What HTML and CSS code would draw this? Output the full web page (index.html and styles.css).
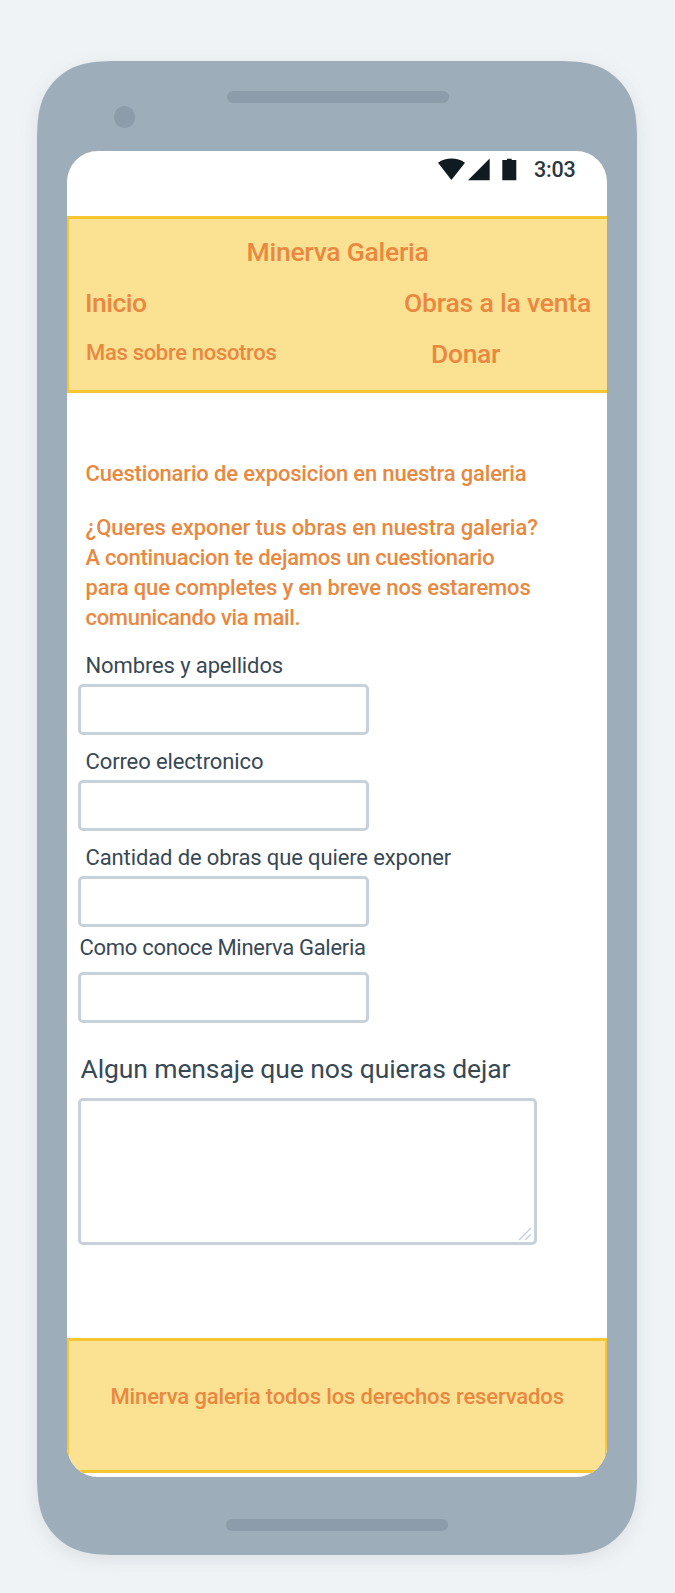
FILE: index.html
```html
<!DOCTYPE html>
<html lang="es">
<head>
<meta charset="utf-8">
<title>Minerva Galeria</title>
<link rel="stylesheet" href="styles.css">
</head>
<body>
<div class="phone">
  <svg class="shell" viewBox="0 0 600 1494" aria-hidden="true">
    <path d="M0 80C0 50 3.8 33.7 18.75 18.75S50 0 80 0H520C550 0 566.3 3.8 581.25 18.75S600 50 600 80V1414C600 1444 596.2 1460.3 581.25 1475.25S550 1494 520 1494H80C50 1494 33.7 1490.2 18.75 1475.25S0 1444 0 1414Z"/>
  </svg>
  <div class="top-bezel">
    <span class="camera"></span>
    <span class="speaker"></span>
  </div>
  <div class="screen">
    <div class="status">
      <svg class="status-icons" width="79" height="23" viewBox="0 0 79 23" aria-hidden="true">
        <path d="M0 4.8C8 -.8 19 -.8 27 4.8L13.4 22Z"/>
        <path d="M30 22.2L51.7.6V22.2Z"/>
        <path d="M64.3 1.9H69V.7H73.7V1.9H78.3V22.2H64.3Z"/>
      </svg>
      <span class="time">3:03</span>
    </div>
    <header class="header">
      <h1 class="brand">Minerva Galeria</h1>
      <nav class="nav">
        <a class="link-home">Inicio</a>
        <a class="link-works">Obras a la venta</a>
        <a class="link-about">Mas sobre nosotros</a>
        <a class="link-donate">Donar</a>
      </nav>
    </header>
    <main class="content">
      <h2 class="heading">Cuestionario de exposicion en nuestra galeria</h2>
      <p class="intro">
        <span class="l1">¿Queres exponer tus obras en nuestra galeria?</span>
        <span class="l2">A continuacion te dejamos un cuestionario</span>
        <span class="l3">para que completes y en breve nos estaremos</span>
        <span class="l4">comunicando via mail.</span>
      </p>
      <form class="form">
        <label class="label name">Nombres y apellidos</label>
        <div class="input"></div>
        <label class="label mail">Correo electronico</label>
        <div class="input"></div>
        <label class="label amount">Cantidad de obras que quiere exponer</label>
        <div class="input"></div>
        <label class="label source">Como conoce Minerva Galeria</label>
        <div class="input"></div>
        <label class="label message">Algun mensaje que nos quieras dejar</label>
        <div class="textarea">
          <svg width="14" height="14" viewBox="0 0 14 14" aria-hidden="true"><path d="M1 13L13 1M7 13L13 7.3"/></svg>
        </div>
      </form>
    </main>
    <footer class="footer">Minerva galeria todos los derechos reservados</footer>
  </div>
  <div class="bottom-bezel"><span class="speaker"></span></div>
</div>
</body>
</html>
```
FILE: styles.css
```css
* { box-sizing: border-box; }

body {
  margin: 0;
  height: 1593px;
  padding: 61px 37px 0;
  background: #eff3f6;
  font-family: Roboto, "Liberation Sans", sans-serif;
  font-size: 22px;
  line-height: 30px;
  white-space: nowrap;
  overflow: hidden;
}

h1, h2, p { margin: 0; font-weight: 500; }

.phone {
  position: relative;
  width: 600px;
  height: 1494px;
  display: flex;
  flex-direction: column;
  align-items: center;
}

.shell {
  position: absolute;
  inset: 0;
  z-index: -1;
  overflow: visible;
  fill: #9eadba;
  filter: drop-shadow(0 5px 9px rgba(80, 90, 100, 0.12));
}

.top-bezel, .bottom-bezel {
  width: 600px;
  display: flex;
  align-items: flex-start;
}

.top-bezel { height: 90px; padding-top: 30px; }
.bottom-bezel { flex: 1; padding-top: 42px; justify-content: center; }

.camera {
  width: 21.5px;
  height: 21.5px;
  margin: 15px 91.5px 0 76.7px;
  border-radius: 50%;
  background: #8d9cab;
}

.speaker {
  width: 222px;
  height: 12px;
  border-radius: 6px;
  background: #8d9cab;
}

.screen {
  width: 540px;
  height: 1326px;
  display: flex;
  flex-direction: column;
  border-radius: 31px;
  overflow: hidden;
  background: #fff;
}

.status {
  height: 65px;
  flex: none;
  display: flex;
  align-items: flex-start;
  padding: 7px 0 0 371px;
}

.status-icons { fill: #101a21; }

.time {
  margin: -3px 0 0 17px;
  font-size: 21.5px;
  font-weight: 500;
  letter-spacing: -0.2px;
  color: #2b353e;
}

.header {
  height: 177px;
  flex: none;
  margin-left: -1px;
  padding: 18px 0 0 20px;
  width: 545px;
  background: #fbe192;
  border: 3px solid #f8c630;
  color: #e98840;
}

.brand {
  font-size: 26.5px;
  letter-spacing: -0.26px;
  margin-left: 157.5px;
}

.nav {
  display: grid;
  grid-template-columns: 316px 1fr;
  grid-template-rows: 30px 30px;
  row-gap: 21px;
  margin: 21px 0 0 -4px;
  font-size: 26.5px;
  font-weight: 500;
}

.link-home { letter-spacing: -0.52px; }
.link-works { margin-left: 3px; letter-spacing: -0.19px; }
.link-about { margin: -1px 0 0 1px; font-size: 22px; letter-spacing: -0.31px; }
.link-donate { margin-left: 30px; letter-spacing: -0.34px; }

.content { padding: 66px 0 0 11px; height: 945px; flex: none; }

.heading {
  margin-left: 7.5px;
  font-size: 22px;
  letter-spacing: -0.16px;
  color: #e98840;
}

.intro {
  margin: 24px 0 0 7.5px;
  display: grid;
  color: #e98840;
}

.l1 { letter-spacing: -0.06px; }
.l2 { letter-spacing: -0.26px; }
.l3 { letter-spacing: -0.14px; }
.l4 { letter-spacing: -0.31px; }

.form {
  display: flex;
  flex-direction: column;
  align-items: flex-start;
  margin-top: 18px;
  color: #384854;
}

.label { letter-spacing: -0.12px; }
.name { margin: 0 0 3px 7.5px; }
.mail { margin: 12px 0 3px 7.5px; }
.amount { margin: 12px 0 3px 7.5px; }
.source { margin: 6px 0 9px 1.5px; letter-spacing: -0.3px; }
.message { margin: 31px 0 14px 2.5px; font-size: 26.5px; letter-spacing: -0.11px; }

.input, .textarea {
  width: 291px;
  height: 51px;
  border: 3px solid #c6d1db;
  border-radius: 5px;
}

.textarea {
  width: 459px;
  height: 147px;
  display: flex;
  align-items: flex-end;
  justify-content: flex-end;
  padding: 0 2px 1px 0;
}

.textarea svg { fill: none; stroke: #c6d1db; stroke-width: 1.5; }

.footer {
  height: 135px;
  flex: none;
  width: 542px;
  margin-left: -1px;
  padding: 41px 0 0 41.5px;
  background: #fbe192;
  border: 3px solid #f8c630;
  font-weight: 500;
  letter-spacing: -0.13px;
  color: #e98840;
}
```
